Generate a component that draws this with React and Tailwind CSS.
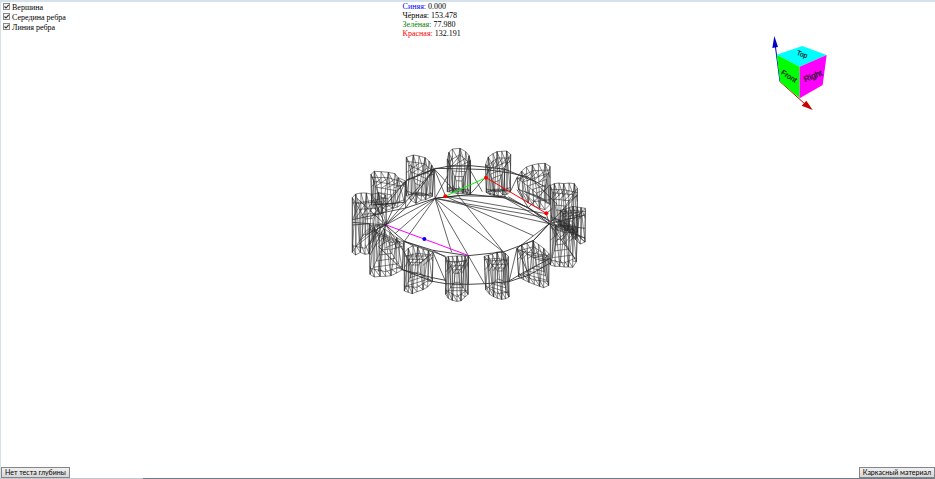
import { useState } from "react";

// Each tooth: the visible upper contour, the matching lower contour, and the
// point its inner face recedes towards.
const TEETH = [
  { top: [[307, 42], [312, 22], [322, 12], [345, 10], [362, 20], [372, 32], [376, 46]], bottom: [[307, 140], [314, 141], [324, 143], [340, 146], [354, 145], [366, 147], [376, 148]], focus: [343, 128] },
  { top: [[184, 37], [205, 30], [222, 33], [240, 38], [252, 48], [260, 60], [267, 74]], bottom: [[184, 152], [198, 166], [213, 175], [228, 166], [242, 164], [255, 157], [262, 154]], focus: [218, 140] },
  { top: [[78, 88], [88, 79], [108, 80], [130, 82], [150, 86], [159, 98], [182, 108]], bottom: [[80, 180], [92, 194], [110, 206], [125, 196], [142, 190], [158, 186], [178, 172]], focus: [112, 178] },
  { top: [[22, 158], [32, 147], [48, 144], [64, 144], [80, 148], [100, 144], [122, 150]], bottom: [[22, 322], [32, 330], [46, 322], [60, 328], [72, 326], [98, 250], [124, 240]], focus: [72, 242] },
  { top: [[73, 238], [88, 246], [103, 242], [118, 252], [134, 262], [155, 278], [176, 290]], bottom: [[75, 388], [88, 396], [105, 394], [122, 394], [138, 392], [155, 384], [172, 374]], focus: [120, 292] },
  { top: [[178, 322], [190, 310], [204, 302], [218, 306], [234, 312], [250, 317], [264, 322]], bottom: [[178, 438], [190, 442], [202, 446], [216, 440], [234, 434], [248, 426], [262, 410]], focus: [206, 372] },
  { top: [[302, 337], [310, 335], [322, 334], [336, 333], [350, 333], [360, 333], [370, 333]], bottom: [[302, 448], [310, 460], [322, 466], [336, 469], [348, 467], [360, 456], [369, 448]], focus: [336, 400] },
  { top: [[418, 334], [430, 331], [442, 327], [456, 321], [470, 319], [480, 324], [490, 334]], bottom: [[422, 434], [434, 448], [446, 455], [458, 460], [470, 463], [482, 461], [492, 456]], focus: [470, 392] },
  { top: [[516, 310], [530, 300], [546, 294], [564, 287], [580, 298], [596, 310], [612, 326]], bottom: [[521, 396], [536, 404], [552, 412], [568, 418], [584, 424], [596, 428], [611, 421]], focus: [590, 352] },
  { top: [[616, 236], [632, 240], [648, 238], [660, 246], [672, 240], [684, 248], [697, 252]], bottom: [[616, 360], [630, 364], [644, 364], [658, 366], [670, 366], [683, 367], [694, 350]], focus: [642, 260] },
  { top: [[646, 196], [660, 192], [672, 188], [684, 184], [696, 186], [708, 188], [721, 190]], bottom: [[646, 244], [658, 250], [668, 258], [680, 270], [692, 284], [706, 297], [720, 291]], focus: [670, 240] },
  { top: [[616, 122], [628, 116], [642, 114], [656, 116], [672, 114], [688, 116], [697, 130]], bottom: [[618, 228], [628, 236], [642, 244], [656, 246], [670, 252], [684, 254], [697, 262]], focus: [638, 218] },
  { top: [[516, 98], [530, 78], [544, 66], [562, 60], [580, 56], [600, 55], [615, 64]], bottom: [[521, 134], [534, 158], [550, 174], [566, 182], [584, 190], [600, 194], [615, 178]], focus: [592, 158] },
  { top: [[422, 58], [430, 36], [444, 26], [456, 20], [470, 19], [485, 18], [497, 28]], bottom: [[424, 142], [436, 150], [448, 152], [460, 154], [474, 150], [486, 148], [496, 140]], focus: [452, 130] },
];

const RINGS = [
  "122,240 182,189 270,160 375,148 480,159 550,188 613,236 565,287 475,321 370,332 264,316 178,289 122,240",
  "110,196 182,108 268,72 308,64 376,62 478,72 566,108 636,178",
  "186,104 272,70 372,72 424,74 496,84 548,96 600,126",
  "100,304 172,374 262,409 302,416 370,418 422,416 492,410 552,390 616,354",
  "172,374 262,398 302,406",
  "492,408 540,380 616,340",
  "270,160 340,152 480,155 545,186",
];

const SPOKES = [
  [270, 160, 370, 332], [270, 160, 320, 322], [340, 152, 475, 321], [270, 160, 475, 321],
  [270, 160, 613, 236], [301, 154, 604, 206], [301, 154, 565, 272], [270, 160, 604, 218],
  [270, 160, 122, 240], [270, 160, 150, 266], [270, 160, 178, 289], [268, 72, 122, 240],
  [268, 72, 270, 160], [268, 72, 302, 154], [268, 72, 182, 189], [268, 72, 340, 150],
  [182, 108, 182, 189], [182, 108, 122, 240], [182, 189, 80, 210], [376, 46, 376, 148],
  [478, 72, 480, 159], [422, 96, 375, 148], [308, 92, 270, 160], [424, 142, 480, 159],
  [376, 76, 412, 140], [480, 159, 613, 236], [490, 155, 618, 230], [550, 188, 640, 246],
  [550, 188, 616, 118], [516, 134, 550, 188], [496, 140, 516, 98], [613, 236, 516, 310],
  [613, 236, 565, 287], [604, 206, 613, 236], [565, 287, 564, 330], [370, 332, 418, 416],
  [370, 332, 370, 418], [264, 322, 302, 410], [264, 316, 302, 337], [178, 289, 178, 322],
  [178, 289, 204, 302], [178, 289, 302, 334], [475, 321, 475, 345], [516, 310, 492, 410],
  [516, 310, 552, 390], [122, 240, 178, 322], [122, 240, 75, 330], [122, 240, 22, 232],
  [122, 240, 36, 160], [122, 240, 60, 270], [122, 240, 100, 380], [613, 236, 721, 210],
  [613, 236, 720, 280], [613, 236, 697, 150], [613, 236, 690, 340], [640, 240, 720, 250],
  [22, 240, 74, 236], [22, 224, 110, 206], [78, 150, 122, 240], [622, 190, 604, 206],
];

const mix = (a, b, t) => [a[0] + (b[0] - a[0]) * t, a[1] + (b[1] - a[1]) * t];
const path = (points) => "M" + points.map((p) => p.map(Math.round).join(" ")).join("L");

function toothPath({ top, bottom, focus }) {
  const n = top.length - 1;
  const parts = [path([...top, ...[...bottom].reverse(), top[0]])];
  for (let i = 0; i <= n; i++) {
    parts.push(path([top[i], bottom[i]]));
    if (i < n) {
      // Long slivers along the flank, short facets at the crown and the root.
      parts.push(path(i % 2 ? [top[i], bottom[i + 1]] : [top[i + 1], bottom[i]]));
      parts.push(path([top[i], mix(top[i + 1], bottom[i + 1], 0.3)]));
      parts.push(path([mix(top[i], bottom[i], 0.84), bottom[i + 1]]));
    }
    if (i > 1) parts.push(path([mix(top[i], bottom[i], 0.16), mix(top[i - 2], bottom[i - 2], 0.4)]));
  }
  parts.push(path([mix(top[0], bottom[0], 0.1), mix(top[3], bottom[3], 0.14), mix(top[n], bottom[n], 0.1)]));
  parts.push(path([mix(top[0], bottom[0], 0.88), mix(top[3], bottom[3], 0.9), mix(top[n], bottom[n], 0.88)]));
  // The inner face recedes as nested copies of the tooth's corners.
  for (const t of [0.22, 0.42, 0.6, 0.76]) {
    const corners = [top[0], top[n], bottom[n], bottom[0], top[0]];
    parts.push(path(corners.map((p) => mix(p, focus, t))));
  }
  for (const p of [top[0], bottom[0], bottom[n], top[n]]) parts.push(path([p, mix(p, focus, 0.76)]));
  return parts.join("");
}

function GearModel({ vertex, middle, edge }) {
  return (
    <svg viewBox="0 0 735 480" className="w-[245px] shrink-0" role="img" aria-label="Gear">
      <g fill="none" stroke="#2b2b2b" strokeWidth="2.2">
        {TEETH.map((tooth, i) => (
          <path key={i} d={toothPath(tooth)} strokeWidth="1.7" />
        ))}
        {RINGS.map((points, i) => (
          <polyline key={i} points={points} strokeWidth="2.6" />
        ))}
        {SPOKES.map(([x1, y1, x2, y2], i) => (
          <line key={i} x1={x1} y1={y1} x2={x2} y2={y2} />
        ))}
      </g>
      {edge && <path d="M124 240L369 331" stroke="#f0f" strokeWidth="3" />}
      <path d="M301 154L423 98" stroke="#0f0" strokeWidth="3" />
      <path d="M423 98L604 205" stroke="#f00" strokeWidth="3" />
      {vertex && (
        <g fill="#f00">
          <circle cx="301" cy="154" r="6" />
          <circle cx="423" cy="98" r="6" />
          <circle cx="604" cy="205" r="6" />
        </g>
      )}
      {middle && <circle cx="238" cy="282" r="6" fill="#00f" />}
    </svg>
  );
}

function ViewCube() {
  return (
    <svg viewBox="0 0 240 255" className="w-20 shrink-0" role="img" aria-label="View cube">
      <path d="M60 155L46 48" stroke="#0000c8" strokeWidth="3" />
      <path d="M43 18L37 54L54 51Z" fill="#0000c8" />
      <path d="M60 155L135 222" stroke="#c80000" strokeWidth="3" />
      <path d="M158 240L125 227L139 212Z" fill="#c80000" />
      <path d="M50 74L127 48L200 75L119 110Z" fill="#0ff" />
      <path d="M50 74L119 110V205L60 155Z" fill="#0f0" />
      <path d="M119 110L200 75L188 165L119 205Z" fill="#f0f" />
      <g fill="#111" stroke="#111" strokeWidth="0.6" textAnchor="middle" className="font-['Liberation_Sans',sans-serif]">
        <text transform="translate(124 79) rotate(20)" fontSize="20">Top</text>
        <text transform="translate(83 145) rotate(32)" fontSize="22">Front</text>
        <text transform="translate(162 146) rotate(-22)" fontSize="25">Right</text>
      </g>
    </svg>
  );
}

function Toggle({ label, checked, onChange }) {
  return (
    <label className="flex h-[10px] items-start gap-[2px]">
      <span className="grid size-[7px] place-items-center">
        <input
          type="checkbox"
          checked={checked}
          onChange={(e) => onChange(e.target.checked)}
          className="peer col-start-1 row-start-1 size-[7px] appearance-none border border-[#8a8a8a] bg-[#f4f4f4]"
        />
        <svg viewBox="0 0 7 7" className="pointer-events-none invisible col-start-1 row-start-1 size-[7px] peer-checked:visible" aria-hidden="true">
          <path d="M1.5 3.5L3 5L5.7 1.8" fill="none" stroke="#333" strokeWidth="1.1" />
        </svg>
      </span>
      {label}
    </label>
  );
}

const READINGS = [
  { name: "Синяя:", value: "0.000", color: "text-[#0000ff]" },
  { name: "Чёрная:", value: "153.478", color: "text-black" },
  { name: "Зелёная:", value: "77.980", color: "text-[#008000]" },
  { name: "Красная:", value: "132.191", color: "text-[#ff0000]" },
];

const BUTTON =
  "h-[11px] border border-[#858585] bg-linear-to-b from-[#f0f0f0] to-[#d6d6d6] px-[3px] font-[Lato,sans-serif] text-[7px] leading-[9px] text-black";

export default function App() {
  const [vertex, setVertex] = useState(true);
  const [middle, setMiddle] = useState(true);
  const [edge, setEdge] = useState(true);

  return (
    <div className="flex h-screen flex-col bg-[#d5e2ec] pt-[2px] pl-px font-['Liberation_Serif',serif] text-[8px] text-black">
      <main className="flex min-h-0 flex-1 flex-col rounded-tl-[2px] bg-white">
        <header className="grid grid-cols-[43%_1fr_auto] items-start">
          <div className="flex flex-col pt-px pl-[2px] leading-[9px]">
            <Toggle label="Вершина" checked={vertex} onChange={setVertex} />
            <Toggle label="Середина ребра" checked={middle} onChange={setMiddle} />
            <Toggle label="Линия ребра" checked={edge} onChange={setEdge} />
          </div>
          <dl className="leading-[9px]">
            {READINGS.map(({ name, value, color }) => (
              <div key={name} className="flex gap-[2px]">
                <dt className={color}>{name}</dt>
                <dd>{value}</dd>
              </div>
            ))}
          </dl>
          <div className="mr-[95px] pt-7">
            <ViewCube />
          </div>
        </header>
        <div className="flex justify-center pt-[30px] pr-[2px]">
          <GearModel vertex={vertex} middle={middle} edge={edge} />
        </div>
        <footer className="mt-auto flex items-end justify-between">
          <button type="button" className={BUTTON}>Нет теста глубины</button>
          <button type="button" className={BUTTON}>Каркасный материал</button>
        </footer>
      </main>
      <div className="-ml-px flex h-px bg-[#6f7c88]">
        <div className="w-[143px] bg-[#c4c8cc]" />
      </div>
    </div>
  );
}
